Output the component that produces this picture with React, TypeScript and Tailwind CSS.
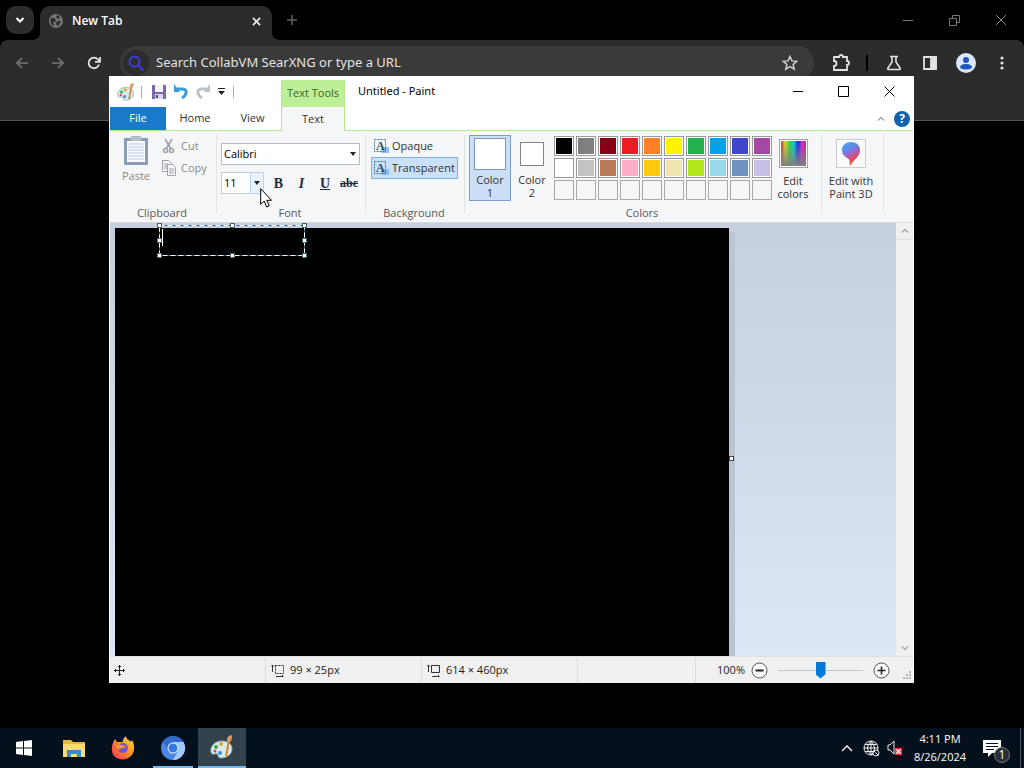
import type { ReactNode } from "react";

const swatches = [
  "bg-black", "bg-[#7f7f7f]", "bg-[#880015]", "bg-[#ed1c24]", "bg-[#ff7f27]",
  "bg-[#fff200]", "bg-[#22b14c]", "bg-[#00a2e8]", "bg-[#3f48cc]", "bg-[#a349a4]",
  "bg-white", "bg-[#c3c3c3]", "bg-[#b97a57]", "bg-[#ffaec9]", "bg-[#ffc90e]",
  "bg-[#efe4b0]", "bg-[#b5e61d]", "bg-[#99d9ea]", "bg-[#7092be]", "bg-[#c8bfe7]",
];

const handles = [
  "-left-[2px] -top-[2px]",
  "left-[71px] -top-[2px]",
  "-right-[2px] -top-[2px]",
  "-left-[2px] top-[13px]",
  "-right-[2px] top-[13px]",
  "-left-[2px] -bottom-[2px]",
  "left-[71px] -bottom-[2px]",
  "-right-[2px] -bottom-[2px]",
];

function Browser() {
  return (
    <div className="text-white">
      <div className="flex h-10 items-center pl-[6px]">
        <button aria-label="Search tabs" className="mr-[6px] grid h-7 w-7 place-items-center rounded-[10px] bg-[#2c2c2c]">
          <svg width="10" height="8" viewBox="0 0 10 8" fill="none" stroke="#fff" strokeWidth="2"><path d="M1.5 2 5 5.5 8.500 2" /></svg>
        </button>
        <div className="relative flex h-[34px] w-[232px] items-center self-end rounded-t-[10px] bg-[#2c2c2c] pb-1 pl-[9px] pr-[11px]">
          <svg className="absolute -left-2 bottom-0" width="8" height="8" viewBox="0 0 8 8"><path d="M8 0v8H0C5 8 8 5 8 0Z" fill="#2c2c2c" /></svg>
          <svg className="absolute -right-2 bottom-0" width="8" height="8" viewBox="0 0 8 8"><path d="M0 0v8h8C3 8 0 5 0 0Z" fill="#2c2c2c" /></svg>
          <svg width="14" height="14" viewBox="0 0 14 14">
            <circle cx="7" cy="7" r="7" fill="#747474" />
            <path d="M2 4h3l2 2-1 2H4l1 3-1 1C2 10 1 8 2 4ZM8 1l3 2-2 2-2-2ZM7 9l2-2h3l-2 4-2 1Z" fill="#2c2c2c" />
          </svg>
          <span className="ml-[9px] flex-1 text-[12px] font-semibold">New Tab</span>
          <button aria-label="Close tab">
            <svg width="9" height="9" viewBox="0 0 10 10" stroke="#eee" strokeWidth="1.800"><path d="m1 1 8 8M9 1 1 9" /></svg>
          </button>
        </div>
        <button aria-label="New tab" className="ml-[14px]">
          <svg width="12" height="12" viewBox="0 0 12 12" stroke="#626262" strokeWidth="1.500"><path d="M6 1v10M1 6h10" /></svg>
        </button>
        <div className="ml-auto flex items-center gap-9 pr-[18px]">
          <button aria-label="Minimize browser"><svg width="10" height="10" stroke="#777"><path d="M0 5.500h10" /></svg></button>
          <button aria-label="Restore browser"><svg width="11" height="11" stroke="#777" fill="none"><path d="M.5 3.500h7v7h-7zM3.500 3V.5h7v7H8" /></svg></button>
          <button aria-label="Close browser"><svg width="10" height="10" stroke="#888"><path d="m0 0 10 10M10 0 0 10" /></svg></button>
        </div>
      </div>
      <div className="flex h-[81px] items-start rounded-t-lg border-b border-[#555] bg-[#2c2c2c] pt-[6px]">
        <div className="flex h-[34px] items-center gap-[22px] pl-[15px] pr-[19px]">
          <button aria-label="Back"><svg width="14" height="14" fill="none" stroke="#777" strokeWidth="1.600"><path d="M13 7H2m5-5L2 7l5 5" /></svg></button>
          <button aria-label="Forward"><svg width="14" height="14" fill="none" stroke="#777" strokeWidth="1.600"><path d="M1 7h11M7 2l5 5-5 5" /></svg></button>
          <button aria-label="Reload"><svg width="14" height="14" fill="none" stroke="#e2e2e2" strokeWidth="1.800"><path d="M12 8.500A5.300 5.300 0 1 1 11 3.500L12.500 5M13 1v4.800H8" /></svg></button>
        </div>
        <label className="flex h-[34px] flex-1 items-center rounded-full bg-[#3a3a3a] pl-[3px] pr-4">
          <span className="grid h-[26px] w-[26px] place-items-center rounded-full bg-[#2c2c2c]">
            <svg width="18" height="18" fill="none" stroke="#3c3ce0" strokeWidth="2"><circle cx="7.500" cy="7.500" r="5" /><path d="m11 11 5.500 5.500" /></svg>
          </span>
          <input aria-label="Address" placeholder="Search CollabVM SearXNG or type a URL" className="ml-[7px] min-w-0 flex-1 bg-transparent font-['Noto_Sans',sans-serif] text-[13px] outline-none placeholder:text-[#e3e3e3]" />
          <svg width="16" height="16" viewBox="0 0 16 16" fill="none" stroke="#d0d0d0" strokeWidth="1.500"><path d="m8 1.500 1.900 4.400 4.800.4-3.600 3.200 1.100 4.700L8 11.700l-4.200 2.500 1.100-4.700-3.600-3.200 4.800-.4Z" /></svg>
        </label>
        <div className="flex h-[34px] items-center pl-[18px] pr-[18px]">
          <button aria-label="Extensions"><svg width="18" height="18" fill="none" stroke="#e2e2e2" strokeWidth="1.800"><path d="M2 3h5a2 2 0 0 1 4 0h4v4a2 2 0 0 1 0 4v5H2v-4a2.500 2.500 0 0 0 0-5Z" /></svg></button>
          <span className="ml-4 h-4 w-[2px] bg-black" />
          <button aria-label="Labs" className="ml-[18px]"><svg width="16" height="16" fill="none" stroke="#e2e2e2" strokeWidth="1.600"><path d="M4 1.500h8M6 2v5l-4 6q-1 1.500 1 1.500h10q2 0 1-1.500l-4-6V2" /></svg></button>
          <button aria-label="Side panel" className="ml-5"><svg width="16" height="16" fill="none" stroke="#e2e2e2" strokeWidth="1.800"><path d="M2 2h12v12H2z" /><path d="M9 2h5v12H9z" fill="#e2e2e2" /></svg></button>
          <button aria-label="Profile" className="ml-[18px]"><svg width="20" height="20"><circle cx="10" cy="10" r="10" fill="#dce6fc" /><circle cx="10" cy="7" r="3" fill="#1a56c4" /><path d="M4 15q0-4 6-4t6 4q-6 3-12 0" fill="#1a56c4" /></svg></button>
          <button aria-label="Menu" className="ml-[22px]"><svg width="8" height="16" fill="#e2e2e2"><circle cx="4" cy="3" r="1.600" /><circle cx="4" cy="8" r="1.600" /><circle cx="4" cy="13" r="1.600" /></svg></button>
        </div>
      </div>
    </div>
  );
}

function Palette({ size }: { size: number }) {
  return (
    <svg width={size} height={size} viewBox="0 0 24 24">
      <path d="M12 6C4 6 0 12 1 17c1 4 4 1 6 2s0 4 4 4c6 0 11-4 11-9s-4-8-10-8Z" fill="#dce9ec" stroke="#8fa9b3" />
      <circle cx="6" cy="12" r="2" fill="#3faa4a" /><circle cx="11" cy="9" r="2" fill="#dca72e" />
      <circle cx="10" cy="18" r="2" fill="#3a8fd8" /><circle cx="5" cy="16" r="1.500" fill="#cc4c3b" />
      <path d="m15 21 3-16 2 1-3 16Z" fill="#c98d3d" /><path d="M17 6c0-4 1-5 5-6 0 3 0 5-2 7Z" fill="#e39a5c" />
    </svg>
  );
}

function TitleBar() {
  return (
    <div className="bg-white">
      <div className="flex h-[31px] items-center">
        <div className="flex w-[171px] items-center pl-[7px]">
          <Palette size={18} />
          <span className="ml-[6px] h-3 w-px bg-[#aaa]" />
          <button aria-label="Save" className="ml-[10px]">
            <svg width="14" height="14"><path d="M0 0h14v14H0Z" fill="#7c6aa8" /><path d="M3 0h8v7H3Z" fill="#f4f4fa" /><path d="M3 9h8v5H3Z" fill="#d8d8e8" /><path d="M4 10h2v3H4Z" fill="#51467a" /></svg>
          </button>
          <button aria-label="Undo" className="ml-2"><svg width="14" height="15" fill="none"><path d="M3 5h5c6 0 5 6 0 9" stroke="#3a9bd9" strokeWidth="3" /><path d="M0 5V0l6 8H0Z" fill="#3a9bd9" /></svg></button>
          <button aria-label="Redo" className="ml-2"><svg width="14" height="15" fill="none"><path d="M11 5H6C0 5 1 11 6 14" stroke="#bcc3c8" strokeWidth="3" /><path d="M14 5V0L8 8h6Z" fill="#bcc3c8" /></svg></button>
          <button aria-label="Customize toolbar" className="ml-2"><svg width="7" height="7"><path d="M0 0h7v1H0ZM0 3h7L3.500 7Z" fill="#222" /></svg></button>
          <span className="ml-2 h-3 w-px bg-[#aaa]" />
        </div>
        <div className="mt-1 flex h-[27px] w-16 items-center justify-center border-x border-[#b4e68c] bg-[#bdee98] text-[#3c6620]">Text Tools</div>
        <h1 className="ml-[13px] font-['Noto_Sans',sans-serif] text-black">Untitled - Paint</h1>
        <div className="ml-auto flex items-center gap-[35px] pr-[18px]">
          <button aria-label="Minimize"><svg width="10" height="11" stroke="#000"><path d="M0 5.500h10" /></svg></button>
          <button aria-label="Maximize"><svg width="11" height="11" fill="none" stroke="#000"><path d="M.5.5h10v10H.5z" /></svg></button>
          <button aria-label="Close"><svg width="11" height="11" stroke="#000"><path d="m.5.500 10 10M10.500.5l-10 10" /></svg></button>
        </div>
      </div>
      <div className="flex h-6 border-b border-[#b4e68c] text-[#333]">
        <button className="h-[23px] w-14 bg-[#1979ca] text-white">File</button>
        <button className="w-[58px]">Home</button>
        <button className="w-[57px]">View</button>
        <button className="h-6 w-16 border-x border-[#b4e68c] bg-[#f5f6f7]">Text</button>
        <div className="ml-auto flex items-center gap-[9px] pr-[3px]">
          <button aria-label="Collapse ribbon"><svg width="8" height="6" fill="none" stroke="#aaa" strokeWidth="1.500"><path d="m1 4.500 3-3 3 3" /></svg></button>
          <button aria-label="Help" className="h-4 w-4 rounded-full bg-[#0f62ac] text-[12px] font-bold leading-4 text-white">?</button>
        </div>
      </div>
    </div>
  );
}

function Group({ label, width, children }: { label: string; width: string; children: ReactNode }) {
  return (
    <section className={`relative flex h-[91px] flex-col justify-between pb-px pt-1 ${width}`}>
      {children}
      <p className="pr-[3px] text-center leading-4 text-[#5a5a5a]">{label}</p>
      <span className="absolute right-0 top-1 h-[78px] w-px bg-[#e2e3e4]" />
    </section>
  );
}

function TextBackgroundIcon() {
  return (
    <svg width="16" height="16">
      <path d="M9 9h7v6H8Z" fill="#8fbdec" />
      <path d="M1.500 1.500h11v12h-11z" fill="none" stroke="#4479a5" strokeDasharray="2 1" />
      <text x="3" y="12" fontFamily="Liberation Serif, serif" fontWeight="700" fontSize="12" fill="#244b6e">A</text>
    </svg>
  );
}

function Ribbon() {
  return (
    <div className="flex h-[92px] border-b border-[#d9dadb] bg-[#f5f6f7] text-[#333]">
      <Group label="Clipboard" width="w-[107px]">
        <div className="flex gap-[11px] pl-3 text-[#8b8b8b]">
          <button className="flex w-7 flex-col items-center gap-[3px]">
            <svg width="26" height="31" viewBox="0 0 26 31">
              <path d="M1 3h24v27H1Z" fill="#8b9db9" /><path d="M4 6h18v21H4Z" fill="#f8fbff" />
              <path d="M8 1h10v5H8Z" fill="#b3bdca" />
              <path d="M5 9h16M5 12h16M5 15h16M5 18h16M5 21h16M5 24h16" stroke="#b9c9e2" />
            </svg>
            <span className="leading-[14px]">Paste</span>
          </button>
          <div className="flex flex-col">
            <button className="flex h-[22px] items-center gap-1">
              <svg width="16" height="16" fill="none" stroke="#9ca3ad" strokeWidth="1.600"><path d="m4 1 6 10M11 1 5 11" /><circle cx="4.500" cy="12.500" r="2" /><circle cx="10.500" cy="12.500" r="2" /></svg>Cut
            </button>
            <button className="flex h-[22px] items-center gap-1">
              <svg width="16" height="16" fill="#f8f8f8" stroke="#9ca3ad"><path d="M1.500.5h6l3 3v8h-9Z" /><path d="M3 4h4M3 6h4M3 8h4" /><path d="M6.500 4.500h5l3 3v8h-8Z" /><path d="M8 9h5M8 11h5M8 13h5" /></svg>Copy
            </button>
          </div>
        </div>
      </Group>
      <Group label="Font" width="w-[149px]">
        <div className="flex flex-col gap-[7px] pl-1 pt-[8px]">
          <div className="relative flex w-[139px] items-center">
            <select aria-label="Font family" className="h-[22px] w-full appearance-none border border-[#b6bdc5] bg-white pl-[2px] text-black"><option>Calibri</option></select>
            <svg className="pointer-events-none absolute right-1" width="6" height="4"><path d="M0 0h6L3 4Z" fill="#222" /></svg>
          </div>
          <div className="flex items-center">
            <div className="relative flex w-[43px] items-center">
              <select aria-label="Font size" className="h-[22px] w-full appearance-none border border-[#c4cdd6] bg-white pl-[2px] text-black"><option>11</option></select>
              <span className="pointer-events-none absolute right-0 grid h-[22px] w-[14px] place-items-center border border-[#b9d3ee] bg-[#eaf3fc]"><svg width="6" height="4"><path d="M0 0h6L3 4Z" fill="#222" /></svg></span>
            </div>
            <div className="ml-[3px] flex font-['Liberation_Serif',serif] text-[14px] text-[#232b40]">
              <button className="w-[23px] font-bold">B</button>
              <button className="w-[23px] font-bold italic">I</button>
              <button className="w-6 font-bold underline">U</button>
              <button className="w-6 text-[12px] font-bold line-through">abc</button>
            </div>
          </div>
        </div>
      </Group>
      <Group label="Background" width="w-[99px]">
        <div className="ml-[5px] flex w-[87px] flex-col">
          <button className="flex h-[22px] items-center gap-[3px] border border-transparent pl-px"><TextBackgroundIcon />Opaque</button>
          <button className="flex h-[22px] items-center gap-[3px] border border-[#7fb0e0] bg-[#cae0f6] pl-px"><TextBackgroundIcon />Transparent</button>
        </div>
      </Group>
      <Group label="Colors" width="w-[357px]">
        <div className="flex pl-1">
          <button className="flex h-[66px] w-[42px] flex-col items-center border border-[#7a9fd0] bg-[#cadef5] pt-[2px] leading-[13px]">
            <span className="mb-[3px] h-8 w-8 border border-[#7f96b5] bg-white" />Color<br />1
          </button>
          <button className="flex h-[66px] w-[42px] flex-col items-center pt-[7px] leading-[13px]">
            <span className="mb-[7px] h-6 w-6 border border-[#848484] bg-white" />Color<br />2
          </button>
          <div className="ml-px mt-px grid grid-cols-10 content-start gap-[2px]">
            {swatches.map((color) => (
              <button key={color} aria-label="Palette color" className="h-5 w-5 border border-[#9a9a9a] bg-white p-px"><span className={`block h-full ${color}`} /></button>
            ))}
            {Array.from({ length: 10 }, (_, i) => (
              <button key={i} aria-label="Empty palette color" className="h-5 w-5 border border-[#a8a8a8]" />
            ))}
          </div>
          <button className="ml-px flex w-10 flex-col items-center pt-1 leading-[13px]">
            <span className="mb-[6px] h-[29px] w-[29px] border border-[#b0a0a0] bg-white p-px">
              <span className="block h-full bg-[linear-gradient(to_top,#808080,transparent),linear-gradient(to_right,#d33,#dd2_17%,#2d3_35%,#0dd_50%,#22e_68%,#d2d_85%,#d23)]" />
            </span>
            Edit<br />colors
          </button>
        </div>
      </Group>
      <Group label="" width="w-[62px]">
        <button className="flex flex-col items-center pr-1 pt-1 leading-[13px]">
          <span className="mb-[6px] grid h-[29px] w-[30px] place-items-center border border-[#ccc] bg-[#fafafa]">
            <svg width="18" height="24" viewBox="0 0 18 24">
              <defs><linearGradient id="drop" x1="0" y1="0" x2="0.400" y2="1"><stop stopColor="#20b9ed" /><stop offset=".5" stopColor="#8172df" /><stop offset=".75" stopColor="#e04a78" /><stop offset="1" stopColor="#e75c25" /></linearGradient></defs>
              <path d="M9 0c6 0 9 4 9 8 0 7-6 9-10 16-1-4 1-6-3-8-3-2-5-4-5-8 0-5 4-8 9-8Z" fill="url(#drop)" />
            </svg>
          </span>
          <span className="whitespace-nowrap">Edit with<br />Paint 3D</span>
        </button>
      </Group>
    </div>
  );
}

function Workspace() {
  return (
    <div className="flex min-h-0 flex-1 bg-linear-to-b from-[#c6cfde] to-[#dce6f6]">
      <div className="flex flex-1 pl-[5px] pt-[5px]">
        <div className="relative h-full w-[614px] bg-black shadow-[6px_4px_0_#b9c5d4]">
          <div className="absolute -top-[3px] left-11 h-[31px] w-[146px]">
            <textarea aria-label="Canvas text" className="h-full w-full resize-none bg-transparent text-white outline-none" />
            <svg className="pointer-events-none absolute inset-0 h-full w-full" fill="none">
              <rect x=".5" y=".5" width="145" height="30" stroke="#1b5f92" />
              <rect x=".5" y=".5" width="145" height="30" stroke="#fff" strokeDasharray="5 3" />
              <path d="M3.500 4v17" stroke="#fff" />
            </svg>
            {handles.map((place) => (
              <span key={place} className={`absolute h-[5px] w-[5px] border border-[#466] bg-white ${place}`} />
            ))}
          </div>
          <span className="absolute -right-[5px] top-[228px] h-[5px] w-[5px] border border-[#444] bg-white" />
        </div>
      </div>
      <div className="flex w-[17px] flex-col justify-between bg-[#f0f0f0]">
        <button aria-label="Scroll up" className="grid h-[17px] place-items-center border-b border-[#e0e0e0]"><svg width="8" height="6" fill="none" stroke="#aaa" strokeWidth="1.500"><path d="m1 4.500 3-3 3 3" /></svg></button>
        <button aria-label="Scroll down" className="grid h-[17px] place-items-center"><svg width="8" height="6" fill="none" stroke="#aaa" strokeWidth="1.500"><path d="m1 1.500 3 3 3-3" /></svg></button>
      </div>
    </div>
  );
}

function StatusBar() {
  return (
    <footer className="relative flex h-[27px] items-center border-t border-[#e0e0e0] bg-[#f0f0f0] text-[#222]">
      <div className="flex h-full w-[156px] items-center border-r border-[#dcdcdc] pl-1">
        <svg width="11" height="11" fill="none" stroke="#222"><path d="M5.500 0v11M0 5.500h11M4 2l1.500-1.500L7 2M4 9l1.500 1.500L7 9M2 4 .5 5.500 2 7m7-3 1.500 1.500L9 7" /></svg>
      </div>
      <div className="flex h-full w-[156px] items-center gap-[6px] border-r border-[#dcdcdc] pl-[5px]">
        <svg width="13" height="13" fill="none" stroke="#333"><path d="M1.500 1v7M0 2.500 1.500 1 3 2.500M5 12.500h7M11 11l1.500 1.500" /><path d="M4.500 1.500h8v8h-8z" strokeDasharray="2 1" /></svg>99 × 25px
      </div>
      <div className="flex h-full w-[156px] items-center gap-[6px] border-r border-[#dcdcdc] pl-[5px]">
        <svg width="13" height="13" fill="none" stroke="#333"><path d="M1.500 1v7M0 2.500 1.500 1 3 2.500M5 12.500h7M11 11l1.500 1.500M4.500 1.500h8v7h-8z" /></svg>614 × 460px
      </div>
      <div className="h-full w-[118px] border-r border-[#dcdcdc]" />
      <div className="ml-auto flex items-center pr-[23px]">
        <span>100%</span>
        <button aria-label="Zoom out" className="ml-[6px]"><svg width="17" height="17" fill="#fafafa" stroke="#555"><circle cx="8.500" cy="8.500" r="7.500" /><path d="M4.500 8.500h8" stroke="#222" strokeWidth="2" /></svg></button>
        <input aria-label="Zoom" type="range" defaultValue="50" className="mx-[10px] h-[18px] w-[85px] appearance-none bg-[linear-gradient(#c8c8c8,#c8c8c8)] bg-[length:100%_1px] bg-center bg-no-repeat [&::-webkit-slider-thumb]:h-[17px] [&::-webkit-slider-thumb]:w-[10px] [&::-webkit-slider-thumb]:appearance-none [&::-webkit-slider-thumb]:bg-[#0078d7] [&::-webkit-slider-thumb]:[clip-path:polygon(0_0,100%_0,100%_75%,50%_100%,0_75%)]" />
        <button aria-label="Zoom in"><svg width="17" height="17" fill="#fafafa" stroke="#555"><circle cx="8.500" cy="8.500" r="7.500" /><path d="M4.500 8.500h8M8.500 4.500v8" stroke="#222" strokeWidth="1.600" /></svg></button>
      </div>
      <svg className="absolute bottom-[3px] right-[2px]" width="9" height="9" fill="#b5b5b5"><path d="M7 0h2v2H7ZM7 3h2v2H7ZM7 6h2v2H7ZM4 3h2v2H4ZM4 6h2v2H4ZM1 6h2v2H1Z" /></svg>
    </footer>
  );
}

function Taskbar() {
  return (
    <nav className="flex h-10 items-center bg-[#04111c] text-white">
      <button aria-label="Start" className="grid h-10 w-12 place-items-center"><svg width="16" height="16" fill="#fff"><path d="m0 2 7-1v6.500H0ZM8 1l8-1v7.500H8ZM0 8.500h7V15l-7-1ZM8 8.500h8V16l-8-1Z" /></svg></button>
      <button aria-label="File Explorer" className="ml-[2px] grid h-10 w-12 place-items-center">
        <svg width="22" height="19"><path d="M0 1h8l2 2h12v15H0Z" fill="#e9b93c" /><path d="M0 5h22v13H0Z" fill="#fadb77" /><path d="M4 18v-7h14v7h-4v-3H8v3Z" fill="#398bd0" /></svg>
      </button>
      <button aria-label="Firefox" className="grid h-10 w-[50px] place-items-center">
        <svg width="24" height="24"><defs><linearGradient id="fox" x1="1" y1="0" x2="0" y2="1"><stop stopColor="#ffe63d" /><stop offset=".5" stopColor="#ff8a28" /><stop offset="1" stopColor="#ef2a68" /></linearGradient></defs>
          <path d="M12 6c-1-2 1-4 3-6 0 4 4 4 5 6l1-2c3 5 3 12-1 16-5 5-13 4-17 0C0 16 0 9 4 3l2 3Z" fill="url(#fox)" /><circle cx="12" cy="12" r="5" fill="#7750cf" /><path d="M5 10c4-3 7 0 10 0-2 3-5 1-7 4Z" fill="#ff972b" />
        </svg>
      </button>
      <button aria-label="Chromium" className="grid h-10 w-[50px] place-items-center bg-[linear-gradient(#76b9ed,#76b9ed)] bg-[length:40px_2px] bg-bottom bg-no-repeat">
        <svg width="24" height="24"><circle cx="12" cy="12" r="12" fill="#4b87e5" /><path d="M12 6h10.400A12 12 0 0 1 12 24l5-9Z" fill="#a4c8fa" /><path d="M2 6A12 12 0 0 1 22.400 6H12a6 6 0 0 0-5 8Z" fill="#3169ce" /><circle cx="12" cy="12" r="5.500" fill="#e3efff" /><circle cx="12" cy="12" r="4.500" fill="#387be0" /></svg>
      </button>
      <button aria-label="Paint" className="grid h-10 w-12 place-items-center border-b-2 border-[#76b9ed] bg-[#33424b]"><Palette size={24} /></button>
      <div className="ml-auto flex h-10 items-center">
        <button aria-label="Show hidden icons"><svg width="12" height="8" fill="none" stroke="#fff" strokeWidth="1.300"><path d="m1 7 5-5 5 5" /></svg></button>
        <button aria-label="Network" className="ml-[10px]"><svg width="17" height="17" fill="none" stroke="#eee"><circle cx="8" cy="8" r="7" /><path d="M1 8h14M2 4.500h12M2 11.500h12M8 1v14M8 1q-7 7 0 14M8 1q7 7 0 14" /><circle cx="13" cy="13" r="3" fill="#04111c" /><path d="m11 11 4 4" /></svg></button>
        <button aria-label="Volume muted" className="ml-[7px]"><svg width="16" height="16" fill="none" stroke="#eee"><path d="M1 5h2l4-4v13l-4-4H1Z" /><path d="M8 8h7v7H8Z" fill="#e33b42" stroke="none" /><path d="m9.500 9.500 4 4m0-4-4 4" stroke="#fff" strokeWidth="1.300" /></svg></button>
        <div className="ml-[7px] w-[60px] text-center leading-[18px]"><p>4:11 PM</p><p>8/26/2024</p></div>
        <button aria-label="Notifications" className="relative ml-1 grid h-10 w-9 place-items-center">
          <svg width="18" height="18" fill="#fff"><path d="M0 1h18v13H9l-4 4v-4H0Z" /><path d="M3 4h12v1H3ZM3 7h12v1H3ZM3 10h8v1H3Z" fill="#04111c" /></svg>
          <span className="absolute bottom-[5px] right-0 h-4 w-4 rounded-full border border-[#777] bg-[#272e35] text-[12px] leading-[14px]">1</span>
        </button>
        <span className="ml-[10px] h-10 w-px bg-[#455461]" /><span className="w-[3px]" />
      </div>
    </nav>
  );
}

export default function App() {
  return (
    <div className="relative flex h-screen flex-col justify-between overflow-hidden bg-black font-['Open_Sans',sans-serif] text-[11px]">
      <Browser />
      <main className="absolute left-[109px] top-[76px] flex h-[607px] w-[805px] flex-col border-x border-white bg-white">
        <TitleBar />
        <Ribbon />
        <Workspace />
        <StatusBar />
      </main>
      <svg className="pointer-events-none absolute left-[260px] top-[188px]" width="13" height="20" viewBox="0 0 13 20"><path d="M.7.7v15.600l3.500-3.200 2.500 5.900 2.600-1.200-2.500-5.500h4.700Z" fill="#fff" stroke="#000" /></svg>
      <Taskbar />
    </div>
  );
}
